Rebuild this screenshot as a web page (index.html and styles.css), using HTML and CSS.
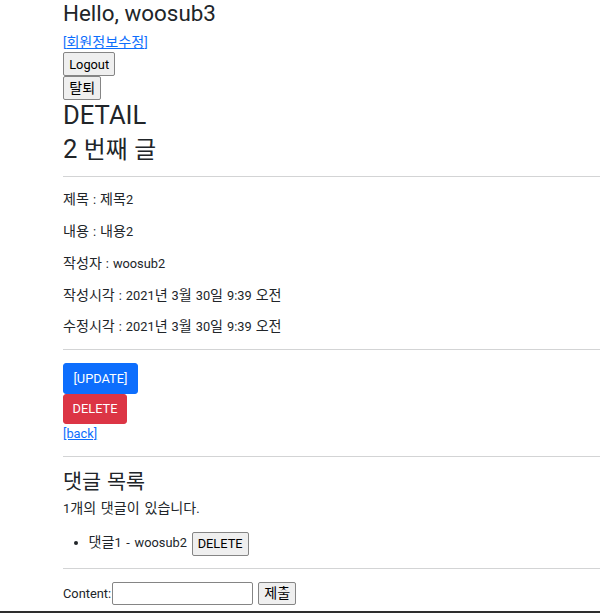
FILE: index.html
```html
<!DOCTYPE html>
<html lang="ko">
<head>
<meta charset="utf-8">
<title>DETAIL</title>
<link rel="stylesheet" href="styles.css">
</head>
<body>
<div class="page">
  <h3 class="hello">Hello, woosub3</h3>
  <div class="line"><a class="link" href="#">[<span class="ko">회원정보수정</span>]</a></div>
  <form class="block"><button type="button" class="sysbtn">Logout</button></form>
  <form class="block"><button type="button" class="sysbtn"><span class="ko">탈퇴</span></button></form>
  <h2 class="title">DETAIL</h2>
  <h2 class="title sub">2 <span class="ko-h">번째 글</span></h2>
  <hr class="rule first">
  <p class="para"><span class="ko">제목</span> : <span class="ko">제목</span>2</p>
  <p class="para"><span class="ko">내용</span> : <span class="ko">내용</span>2</p>
  <p class="para"><span class="ko">작성자</span> : woosub2</p>
  <p class="para"><span class="ko">작성시각</span> : 2021<span class="ko">년</span> 3<span class="ko">월</span> 30<span class="ko">일</span> 9:39 <span class="ko">오전</span></p>
  <p class="para"><span class="ko">수정시각</span> : 2021<span class="ko">년</span> 3<span class="ko">월</span> 30<span class="ko">일</span> 9:39 <span class="ko">오전</span></p>
  <hr class="rule">
  <div class="actions">
    <a class="btn primary" href="#">[UPDATE]</a>
    <button type="button" class="btn danger">DELETE</button>
    <a class="link line" href="#">[back]</a>
  </div>
  <hr class="rule">
  <h4 class="subhead"><span class="ko-s">댓글 목록</span></h4>
  <p class="para">1<span class="ko">개의 댓글이 있습니다</span>.</p>
  <ul class="comments">
    <li class="comment"><span class="ko">댓글</span>1 - woosub2 <button type="button" class="sysbtn">DELETE</button></li>
  </ul>
  <hr class="rule">
  <form class="write">
    <label class="label" for="content">Content:</label><input id="content" class="input" type="text"><button type="button" class="sysbtn submit"><span class="ko">제출</span></button>
  </form>
</div>
</body>
</html>
```

FILE: styles.css
```css
html, body {
  margin: 0;
  padding: 0;
  background: #fff;
}
body {
  font-family: Roboto, "Noto Sans CJK KR", sans-serif;
  font-size: 12.8px;
  line-height: 19.2px;
  color: #212529;
}
.ko, .ko-h, .ko-s {
  font-family: "Noto Sans CJK KR", sans-serif;
  line-height: 1;
}
.ko {
  font-size: 1.1em;
}
.ko-h {
  font-size: 0.93em;
}
.ko-s {
  font-size: 1.08em;
}
.page {
  box-sizing: border-box;
  height: 613px;
  overflow: hidden;
  padding: 0 0 0 63px;
  border-bottom: 2px solid #2e2e2e;
}
.hello {
  margin: 0 0 6.4px;
  font-size: 22.4px;
  line-height: 26.9px;
  font-weight: 400;
}
.line {
  display: block;
  line-height: 19.2px;
  height: 19.2px;
}
.link {
  color: #0d6efd;
  text-decoration: underline;
}
.block {
  margin: 0;
  display: block;
  height: 24px;
}
.sysbtn {
  box-sizing: border-box;
  height: 24px;
  font-family: inherit;
  font-size: 12.8px;
  line-height: 19.2px;
  color: #000;
  background: #efefef;
  border: 1px solid #858585;
  border-radius: 2px;
  padding: 0 5.2px;
  margin: 0;
  display: inline-block;
  vertical-align: middle;
  word-spacing: 0;
}
.title {
  margin: 0 0 2.6px;
  font-size: 25.6px;
  line-height: 30.7px;
  height: 30.7px;
  font-weight: 400;
}
.title.sub {
  margin-bottom: 0;
}
.rule {
  margin: 12.8px 0;
  border: 0;
  border-top: 1px solid #d3d4d5;
  height: 0;
}
.rule.first {
  margin-top: 11.3px;
}
.para {
  margin: 0 0 12.8px;
  height: 19.2px;
  word-spacing: 0.8px;
}
.actions {
  display: flex;
  flex-direction: column;
  align-items: flex-start;
}
.btn {
  display: inline-block;
  font-family: inherit;
  font-size: 12.8px;
  line-height: 19.2px;
  padding: 4.6px 9.6px;
  border: 1px solid transparent;
  border-radius: 3px;
  color: #fff;
  text-decoration: none;
  margin: 0;
}
.primary {
  background: #0d6efd;
  border-color: #0d6efd;
}
.danger {
  background: #dc3545;
  border-color: #dc3545;
  padding-left: 8.6px;
  padding-right: 8.6px;
}
.subhead {
  margin: 0 0 6.4px;
  font-size: 19.2px;
  line-height: 23px;
  height: 23px;
  font-weight: 400;
}
.comments {
  margin: 0 0 12.8px;
  padding-left: 25.6px;
}
.comment {
  line-height: 24px;
  height: 24px;
  word-spacing: 1.5px;
}
.write {
  margin: 0;
  display: flex;
  align-items: center;
}
.label {
  padding-right: 1px;
}
.input {
  box-sizing: border-box;
  width: 141px;
  height: 23px;
  margin: 0;
  padding: 1px 2px;
  border: 1px solid #858585;
  border-radius: 2px;
  font-family: inherit;
  font-size: 12.8px;
}
.submit {
  margin-left: 5px;
  height: 23px;
}
```
